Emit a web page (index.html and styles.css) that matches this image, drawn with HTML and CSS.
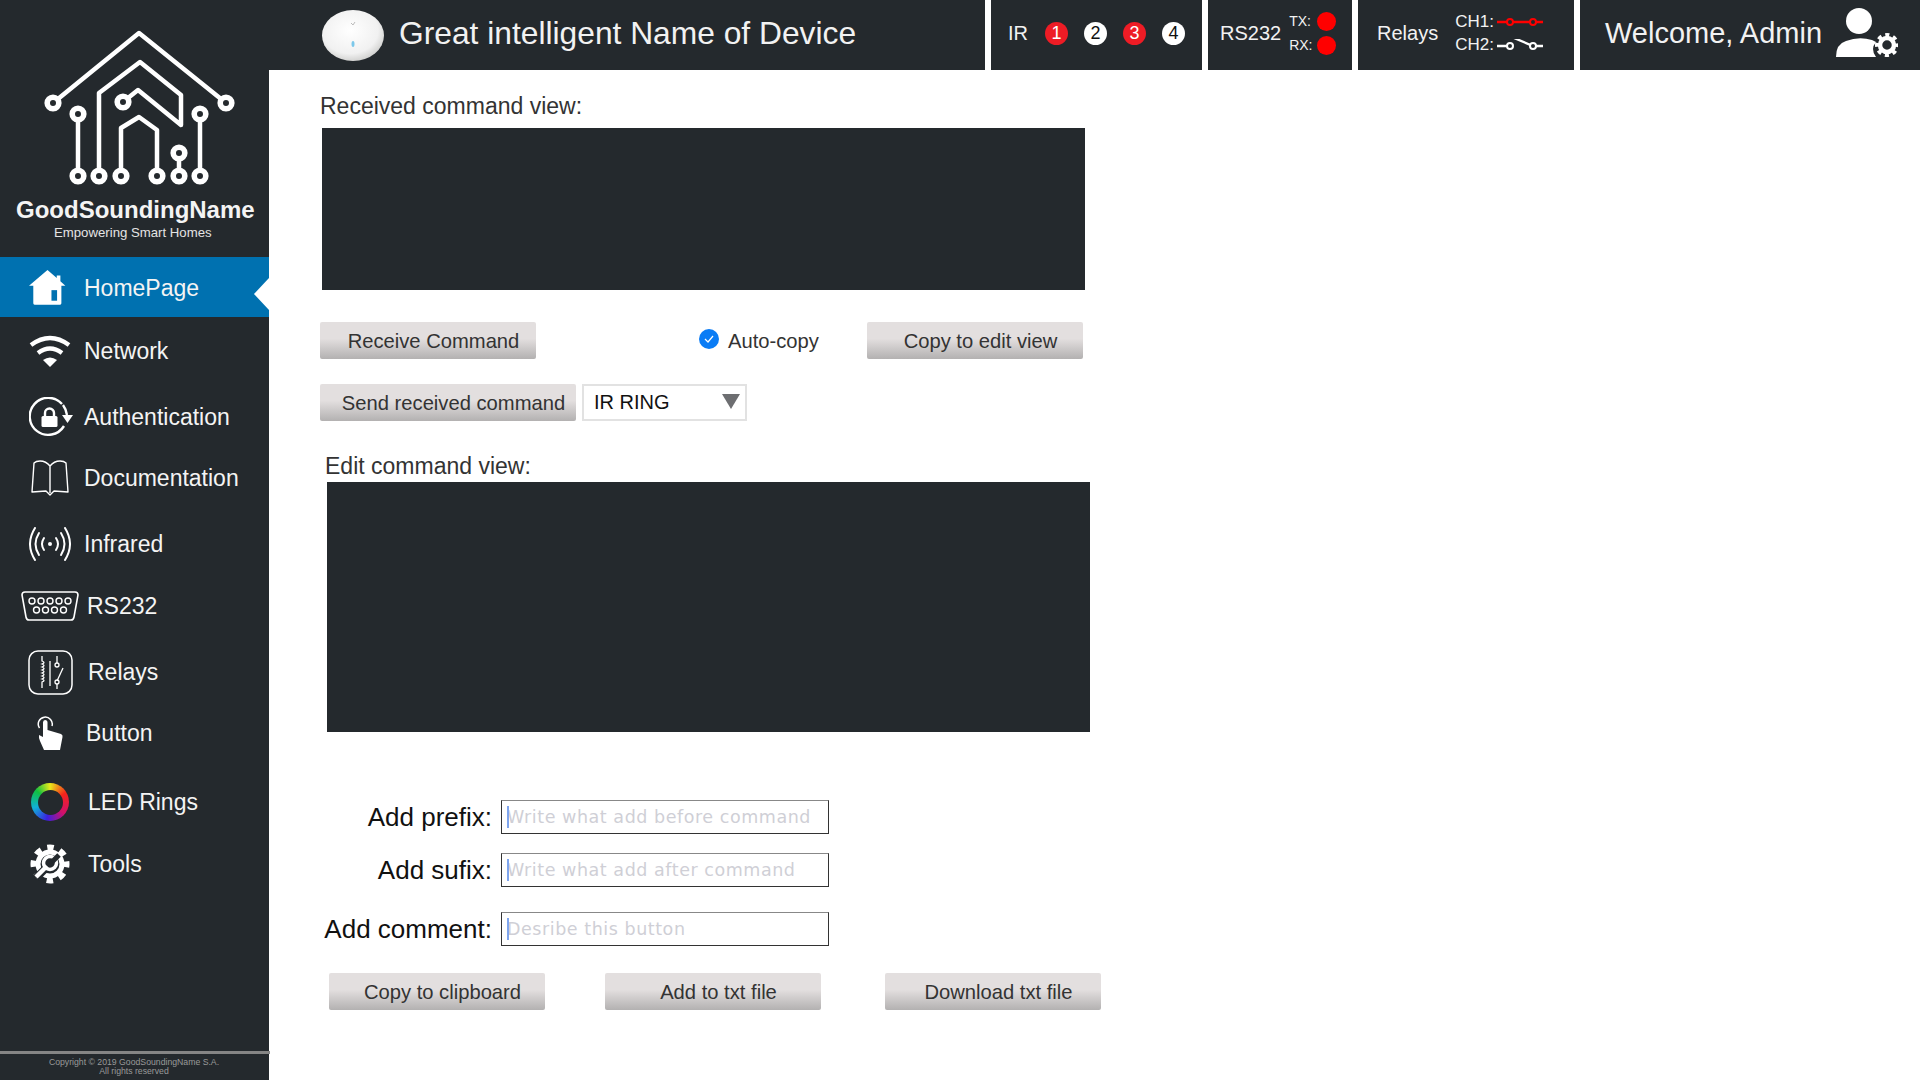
FILE: index.html
```html
<!DOCTYPE html>
<html lang="en">
<head>
    <meta charset="UTF-8">
    <meta name="viewport" content="width=device-width, initial-scale=1.0">
    <title>Great intelligent Name of Device</title>
    <link rel="stylesheet" href="styles.css">
</head>
<body>
    <aside class="sidebar">
        <div class="brand">
            <svg class="brand-logo" viewBox="40 20 200 170" width="200" height="170">
                <g fill="none" stroke="#fff" stroke-width="4.500" stroke-linejoin="round">
                    <path d="M53 103 139 33 226 103"/>
                    <path d="M78 114V176"/>
                    <path d="M99 176V93L140 62 181 95V125L138 90 123 102"/>
                    <path d="M121 176V128L139 117 157 130V176"/>
                    <path d="M179 153V176"/>
                    <path d="M200 114V176"/>
                </g>
                <g fill="#24292d" stroke="#fff" stroke-width="5.6">
                    <circle cx="53" cy="103" r="5.8"/>
                    <circle cx="226" cy="103" r="5.8"/>
                    <circle cx="123" cy="102" r="5.8"/>
                    <circle cx="78" cy="114" r="5.8"/>
                    <circle cx="200" cy="114" r="5.8"/>
                    <circle cx="179" cy="153" r="5.8"/>
                    <circle cx="78" cy="176" r="5.8"/>
                    <circle cx="99" cy="176" r="5.8"/>
                    <circle cx="121" cy="176" r="5.8"/>
                    <circle cx="157" cy="176" r="5.8"/>
                    <circle cx="179" cy="176" r="5.8"/>
                    <circle cx="200" cy="176" r="5.8"/>
                </g>
            </svg>
            <div class="brand-name">GoodSoundingName</div>
            <div class="brand-tag">Empowering Smart Homes</div>
        </div>
        <nav class="nav">
            <a class="nav-item active">
                <span class="nav-icon">
                    <svg viewBox="87 805 112 110" width="37" height="37">
                        <path fill="#fff" d="M143 807 171 831V824H182V841L197 855H185V908Q185 912 181 912H104Q100 912 100 908V855H87Z"/>
                        <rect x="155" y="868" width="17" height="32" fill="#0071b0"/>
                    </svg>
                </span>
                <span class="nav-label">HomePage</span>
            </a>
            <a class="nav-item">
                <span class="nav-icon">
                    <svg viewBox="0 0 42 32" width="42" height="32">
                        <g fill="none" stroke="#fff" stroke-width="4.4">
                            <path d="M2 10Q21 -4 40 10"/>
                            <path d="M9 18Q21 9 33 18"/>
                        </g>
                        <path fill="#fff" d="M21 32 14 25Q21 20 28 25Z"/>
                    </svg>
                </span>
                <span class="nav-label">Network</span>
            </a>
            <a class="nav-item">
                <span class="nav-icon icon-auth">
                    <svg viewBox="0 0 46 40" width="46" height="40">
                        <path fill="none" stroke="#fff" stroke-width="2.4" d="M33 7A18.500 18.500 0 1 0 35 29"/>
                        <path fill="none" stroke="#fff" stroke-width="2.4" d="M34 8Q37 12 38 18"/>
                        <path fill="#fff" d="M33 18H44L38.500 26Z"/>
                        <path fill="none" stroke="#fff" stroke-width="2.4" d="M16 20V16A4.500 4.500 0 0 1 25 16V20"/>
                        <rect x="12.500" y="19" width="16" height="11" rx="1.500" fill="#fff"/>
                    </svg>
                </span>
                <span class="nav-label">Authentication</span>
            </a>
            <a class="nav-item">
                <span class="nav-icon">
                    <svg viewBox="0 0 38 36" width="38" height="36">
                        <path fill="none" stroke="#fff" stroke-width="1.400" stroke-linejoin="round" d="M19 6Q15 1 9 1 5 1 3 3L1 32 15 31 19 35 23 31 37 32 35 3Q33 1 29 1 23 1 19 6V33"/>
                    </svg>
                </span>
                <span class="nav-label">Documentation</span>
            </a>
            <a class="nav-item">
                <span class="nav-icon">
                    <svg viewBox="0 0 42 34" width="42" height="34">
                        <circle cx="21" cy="17" r="2" fill="#fff"/>
                        <g fill="none" stroke="#fff" stroke-width="2" stroke-linecap="round">
                            <path d="M15 11Q11 17 15 23"/>
                            <path d="M27 11Q31 17 27 23"/>
                            <path d="M10 6Q3 17 10 28"/>
                            <path d="M32 6Q39 17 32 28"/>
                            <path d="M6 1Q-4 17 6 33"/>
                            <path d="M36 1Q46 17 36 33"/>
                        </g>
                    </svg>
                </span>
                <span class="nav-label">Infrared</span>
            </a>
            <a class="nav-item">
                <span class="nav-icon">
                    <svg viewBox="0 0 58 30" width="58" height="30">
                        <path fill="none" stroke="#fff" stroke-width="1.600" d="M4 1H54Q57 1 57 4L53 26Q52.500 29 50 29H8Q5.500 29 5 26L1 4Q1 1 4 1Z"/>
                        <g fill="none" stroke="#fff" stroke-width="1.400">
                            <circle cx="11" cy="10" r="3"/>
                            <circle cx="20" cy="10" r="3"/>
                            <circle cx="29" cy="10" r="3"/>
                            <circle cx="38" cy="10" r="3"/>
                            <circle cx="47" cy="10" r="3"/>
                            <circle cx="15.500" cy="19" r="3"/>
                            <circle cx="24.500" cy="19" r="3"/>
                            <circle cx="33.500" cy="19" r="3"/>
                            <circle cx="42.500" cy="19" r="3"/>
                        </g>
                    </svg>
                </span>
                <span class="nav-label nav-label-rs">RS232</span>
            </a>
            <a class="nav-item">
                <span class="nav-icon">
                    <svg viewBox="0 0 45 45" width="45" height="45">
                        <rect x="1" y="1" width="43" height="43" rx="9" fill="none" stroke="#fff" stroke-width="1.500"/>
                        <g fill="none" stroke="#fff" stroke-width="1.300">
                            <path d="M14 6V11Q18 12.500 14 14 18 15.500 14 17 18 18.500 14 20 18 21.500 14 23 18 24.500 14 26 18 27.500 14 29 18 30.500 14 32V38"/>
                            <path d="M22 11V36"/>
                            <path d="M29 6V13"/>
                            <circle cx="29" cy="15" r="2"/>
                            <path d="M35 18 29 31"/>
                            <circle cx="29" cy="32" r="2"/>
                            <path d="M29 34V39"/>
                        </g>
                    </svg>
                </span>
                <span class="nav-label nav-label-far">Relays</span>
            </a>
            <a class="nav-item">
                <span class="nav-icon">
                    <svg viewBox="0 0 26 36" width="26" height="36">
                        <path fill="none" stroke="#fff" stroke-width="1.500" d="M2.500 13A7 7 0 1 1 15 11"/>
                        <path fill="#fff" d="M6 7.500Q6 5 8 5 10.500 5 10.500 7.500V15L24 19Q26 20 25.500 22L23 35 7 35 3 26Q1.500 22 2 20L6 22Z"/>
                    </svg>
                </span>
                <span class="nav-label nav-label-mid">Button</span>
            </a>
            <a class="nav-item">
                <span class="nav-icon">
                    <span class="led-ring"></span>
                </span>
                <span class="nav-label nav-label-far">LED Rings</span>
            </a>
            <a class="nav-item">
                <span class="nav-icon">
                    <svg viewBox="0 0 40 40" width="40" height="40">
                        <circle cx="20" cy="20" r="16" fill="none" stroke="#fff" stroke-width="7" stroke-dasharray="6.300 6.266" stroke-dashoffset="3.150"/>
                        <circle cx="20" cy="20" r="12" fill="none" stroke="#fff" stroke-width="5"/>
                        <path fill="none" stroke="#24292d" stroke-width="8" d="M6 34 17 23"/>
                        <path fill="none" stroke="#fff" stroke-width="4.500" d="M6 33 17 22"/>
                        <circle cx="20" cy="19" r="6.500" fill="none" stroke="#fff" stroke-width="3.500"/>
                        <path fill="none" stroke="#24292d" stroke-width="5" d="M22 18 29 11"/>
                    </svg>
                </span>
                <span class="nav-label nav-label-far">Tools</span>
            </a>
        </nav>
        <footer class="copyright">
            Copyright © 2019 GoodSoundingName S.A.<br>
            All rights reserved
        </footer>
    </aside>

    <div class="page">
        <header class="topbar">
            <div class="top-sec sec-device">
                <svg class="device-pic" viewBox="0 0 62 51" width="62" height="51">
                    <defs>
                        <radialGradient id="deviceFill" cx="0.45" cy="0.4" r="0.65">
                            <stop offset="0" stop-color="#ffffff"/>
                            <stop offset="0.7" stop-color="#f1f1f1"/>
                            <stop offset="1" stop-color="#c9c9c7"/>
                        </radialGradient>
                    </defs>
                    <ellipse cx="31" cy="25.500" rx="31" ry="25.500" fill="url(#deviceFill)"/>
                    <ellipse cx="31" cy="34" rx="1.500" ry="3" fill="#7cc8ea"/>
                    <path fill="none" stroke="#bbb" d="M29 13 31 15 33 12"/>
                </svg>
                <h1 class="device-name">Great intelligent Name of Device</h1>
            </div>
            <div class="top-sec sec-ir">
                <span class="top-label">IR</span>
                <div class="ir-leds">
                    <span class="ir-led on">1</span>
                    <span class="ir-led">2</span>
                    <span class="ir-led on">3</span>
                    <span class="ir-led">4</span>
                </div>
            </div>
            <div class="top-sec sec-rs">
                <span class="top-label">RS232</span>
                <div class="rs-lines">
                    <div class="rs-line">TX:<span class="rs-dot"></span></div>
                    <div class="rs-line">RX:<span class="rs-dot"></span></div>
                </div>
            </div>
            <div class="top-sec sec-relays">
                <span class="top-label">Relays</span>
                <div class="ch-lines">
                    <div class="ch-line">CH1:
                        <svg viewBox="0 0 46 12" width="46" height="12">
                            <path stroke="#f00" stroke-width="2.400" d="M0 6H46"/>
                            <circle cx="13" cy="6" r="3" fill="#24292d" stroke="#f00" stroke-width="2"/>
                            <circle cx="36" cy="6" r="3" fill="#24292d" stroke="#f00" stroke-width="2"/>
                        </svg>
                    </div>
                    <div class="ch-line">CH2:
                        <svg viewBox="0 0 46 12" width="46" height="12">
                            <path fill="none" stroke="#fff" stroke-width="2.400" d="M0 7H13M17 -1 36 7H46"/>
                            <circle cx="13" cy="7" r="3" fill="#24292d" stroke="#fff" stroke-width="2"/>
                            <circle cx="36" cy="7" r="3" fill="#24292d" stroke="#fff" stroke-width="2"/>
                        </svg>
                    </div>
                </div>
            </div>
            <div class="top-sec sec-user">
                <span class="welcome">Welcome, Admin</span>
                <svg class="user-icon" viewBox="0 0 66 52" width="66" height="52">
                    <circle cx="27" cy="15" r="13" fill="#fff"/>
                    <path fill="#fff" d="M4 51Q4 38 14 35 27 30 40 34L44 36Q38 43 44 51Z"/>
                    <circle cx="55" cy="39" r="10" fill="none" stroke="#fff" stroke-width="4" stroke-dasharray="4 3.850" stroke-dashoffset="2"/>
                    <circle cx="55" cy="39" r="7" fill="none" stroke="#fff" stroke-width="4.500"/>
                </svg>
            </div>
        </header>

        <main class="content">
            <div class="view-title">Received command view:</div>
            <div class="view-box received"></div>

            <div class="btn-row row-receive">
                <button class="btn" type="button">Receive Command</button>
                <label class="auto-copy">
                    <svg viewBox="0 0 20 20" width="20" height="20">
                        <circle cx="10" cy="10" r="10" fill="#0a7cf5"/>
                        <path fill="none" stroke="#fff" stroke-width="1.200" d="M6 10 9 13 14 7"/>
                    </svg>
                    Auto-copy
                </label>
                <button class="btn btn-right" type="button">Copy to edit view</button>
            </div>

            <div class="btn-row row-send">
                <button class="btn btn-send" type="button">Send received command</button>
                <div class="select-box">IR RING<span class="select-arrow"></span></div>
            </div>

            <div class="view-title edit-title">Edit command view:</div>
            <div class="view-box edited"></div>

            <form class="cmd-form">
                <div class="form-row">
                    <label for="prefix">Add prefix:</label>
                    <span class="input-wrap"><input id="prefix" type="text" placeholder="Write what add before command"></span>
                </div>
                <div class="form-row">
                    <label for="sufix">Add sufix:</label>
                    <span class="input-wrap"><input id="sufix" type="text" placeholder="Write what add after command"></span>
                </div>
                <div class="form-row form-row-comment">
                    <label for="comment">Add comment:</label>
                    <span class="input-wrap"><input id="comment" type="text" placeholder="Desribe this button"></span>
                </div>
            </form>

            <div class="btn-row row-output">
                <button class="btn" type="button">Copy to clipboard</button>
                <button class="btn" type="button">Add to txt file</button>
                <button class="btn btn-last" type="button">Download txt file</button>
            </div>
        </main>
    </div>
</body>
</html>
```

FILE: styles.css
```css
* {
    box-sizing: border-box;
}
body {
    font-family: "Liberation Sans", Arial, sans-serif;
    margin: 0;
    height: 1080px;
    overflow: hidden;
    display: flex;
    background-color: #fff;
    color: #333;
}

/* sidebar */
.sidebar {
    width: 269px;
    height: 1080px;
    flex-shrink: 0;
    background-color: #24292d;
    color: #fff;
    display: flex;
    flex-direction: column;
}
.brand {
    height: 257px;
    padding-top: 20px;
}
.brand-logo {
    display: block;
    margin-left: 40px;
}
.brand-name {
    margin-top: 6px;
    padding-left: 16px;
    font-size: 24px;
    font-weight: bold;
    line-height: 28px;
    color: #f4f4f4;
}
.brand-tag {
    margin-top: 1px;
    padding-left: 54px;
    font-size: 13.2px;
    line-height: 16px;
    color: #e4e4e4;
}
.nav {
    display: grid;
    grid-template-rows: 74px 66px 61px 66px 62px 66px 61px 69px 62px 40px;
    align-items: start;
}
.nav-item {
    height: 40px;
    display: flex;
    align-items: center;
    padding-left: 20px;
}
.nav-item.active {
    position: relative;
    height: 60px;
    background-color: #0071b0;
}
.nav-item.active::after {
    content: "";
    position: absolute;
    right: 0;
    top: 21px;
    border-style: solid;
    border-width: 16px 15px 16px 0;
    border-color: transparent #fff transparent transparent;
}
.nav-item.active .nav-label {
    margin-top: 3px;
}
.nav-item.active svg {
    margin-right: 6px;
}
.nav-icon {
    width: 60px;
    height: 40px;
    display: flex;
    align-items: center;
    justify-content: center;
    flex-shrink: 0;
}
.icon-auth svg {
    margin-left: 4px;
}
.nav-label {
    margin-left: 4px;
    font-size: 23px;
    color: #f4f4f4;
}
.nav-label-mid {
    margin-left: 6px;
}
.nav-label-rs {
    margin-left: 7px;
}
.nav-label-far {
    margin-left: 8px;
}
.led-ring {
    width: 38px;
    height: 38px;
    border-radius: 50%;
    background: conic-gradient(#e8e81a, #f5241a 60deg, #d0106a 130deg, #3a20e0 190deg, #10b0d8 250deg, #10c040 310deg, #e8e81a);
    display: flex;
    align-items: center;
    justify-content: center;
}
.led-ring::after {
    content: "";
    width: 25px;
    height: 25px;
    border-radius: 50%;
    background-color: #24292d;
}
.copyright {
    margin-top: auto;
    height: 29px;
    border-top: 3px solid #858585;
    width: 270px;
    padding: 4px 2px 0 0;
    text-align: center;
    font-size: 8.7px;
    line-height: 9px;
    color: #999;
}

/* header */
.page {
    flex: 1;
    display: flex;
    flex-direction: column;
}
.topbar {
    height: 70px;
    display: flex;
    gap: 6px;
    flex-shrink: 0;
}
.top-sec {
    height: 70px;
    padding-bottom: 4px;
    background-color: #24292d;
    color: #f2f2f2;
    display: flex;
    align-items: center;
}
.sec-device {
    width: 716px;
    padding-left: 53px;
}
.device-pic {
    flex-shrink: 0;
    margin-top: 4px;
}
.device-name {
    margin: 0 0 0 15px;
    font-size: 31.75px;
    font-weight: normal;
}
.sec-ir {
    width: 211px;
    padding-left: 17px;
}
.top-label {
    font-size: 20px;
}
.ir-leds {
    display: flex;
    gap: 16px;
    margin-left: 17px;
}
.ir-led {
    width: 23px;
    height: 23px;
    border-radius: 50%;
    background-color: #fff;
    color: #111;
    font-size: 18px;
    line-height: 23px;
    text-align: center;
}
.ir-led.on {
    background-color: #ee1c25;
    color: #fff;
}
.sec-rs {
    width: 144px;
    padding-left: 12px;
}
.rs-lines {
    margin-left: 8px;
    width: 47px;
    display: flex;
    flex-direction: column;
    gap: 5px;
}
.rs-line {
    height: 19px;
    display: flex;
    align-items: center;
    justify-content: space-between;
    font-size: 14px;
}
.rs-dot {
    width: 19px;
    height: 19px;
    border-radius: 50%;
    background-color: #f00;
}
.sec-relays {
    width: 216px;
    padding-left: 19px;
}
.ch-lines {
    margin-left: 17px;
    display: flex;
    flex-direction: column;
    gap: 3px;
}
.ch-line {
    height: 20px;
    display: flex;
    align-items: center;
    gap: 3px;
    font-size: 17px;
}
.sec-user {
    width: 340px;
    padding-left: 25px;
}
.welcome {
    font-size: 29px;
}
.user-icon {
    margin-left: 10px;
    margin-top: -2px;
}

/* main content */
.content {
    padding: 23px 0 0 51px;
}
.view-title {
    height: 26px;
    font-size: 23px;
    line-height: 26px;
}
.view-box {
    background-color: #24292d;
    width: 763px;
}
.received {
    height: 162px;
    margin: 9px 0 0 2px;
}
.edit-title {
    margin: 32px 0 0 5px;
}
.edited {
    height: 250px;
    margin: 3px 0 0 7px;
}
.btn-row {
    display: flex;
    align-items: center;
}
.row-receive {
    margin-top: 32px;
    width: 763px;
}
.row-send {
    margin-top: 25px;
    gap: 6px;
}
.row-output {
    margin: 27px 0 0 9px;
    gap: 60px;
}
.btn {
    width: 216px;
    height: 37px;
    padding: 2px 0 0 11px;
    border: 0;
    border-radius: 2px;
    background: linear-gradient(#e3dfdf 0, #e3dfdf 45%, #b3b1b1 100%);
    font-family: inherit;
    font-size: 20.2px;
    color: #333;
}
.btn-right {
    margin-left: auto;
}
.btn-send {
    width: 256px;
}
.btn-last {
    margin-left: 4px;
}
.auto-copy {
    margin-left: 163px;
    padding-top: 1px;
    display: flex;
    align-items: center;
    gap: 9px;
    font-size: 20.2px;
}
.auto-copy svg {
    margin-top: -4px;
}
.select-box {
    position: relative;
    width: 165px;
    height: 37px;
    padding-left: 10px;
    border: 2px solid #e2e2e2;
    font-size: 20px;
    line-height: 33px;
    color: #111;
}
.select-arrow {
    position: absolute;
    right: 5px;
    top: 8px;
    border-style: solid;
    border-width: 15px 9px 0 9px;
    border-color: #6d6e71 transparent transparent transparent;
}
.cmd-form {
    margin-top: 68px;
}
.form-row {
    display: flex;
    align-items: center;
    margin-bottom: 19px;
}
.form-row label {
    width: 172px;
    margin-right: 9px;
    padding-top: 1px;
    text-align: right;
    font-size: 26px;
    color: #111;
}
.form-row-comment {
    margin-top: 25px;
    margin-bottom: 0;
}
.input-wrap {
    position: relative;
    display: block;
}
.input-wrap::before {
    content: "";
    position: absolute;
    left: 6px;
    top: 6px;
    width: 2px;
    height: 22px;
    background-color: #7fa5ee;
}
.form-row input {
    display: block;
    width: 328px;
    height: 34px;
    padding: 0 0 0 5px;
    border: 1px solid #333;
    border-top-color: #888;
    font-family: "DejaVu Sans", sans-serif;
    font-size: 17.5px;
    letter-spacing: 0.55px;
}
.form-row input::placeholder {
    color: #cfcfd6;
    opacity: 1;
}
```
